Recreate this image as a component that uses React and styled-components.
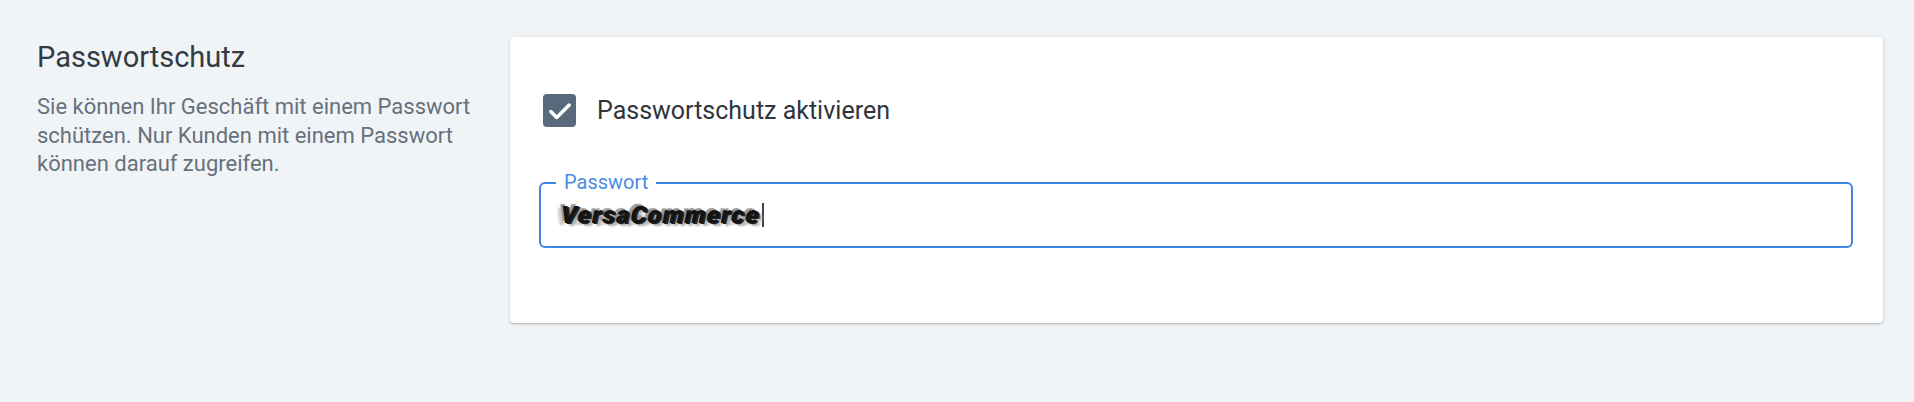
import React from 'react';
import styled, { createGlobalStyle } from 'styled-components';

const GlobalStyle = createGlobalStyle`
  html, body {
    margin: 0;
    padding: 0;
    background: #f1f4f7;
    font-family: Roboto, "Noto Sans", "Liberation Sans", sans-serif;
  }
`;

const Page = styled.div`
  width: 1914px;
  height: 402px;
  box-sizing: border-box;
  padding: 37px 31px 0 37px;
  display: flex;
  gap: 33px;
`;

const Aside = styled.div`
  width: 440px;
  flex-shrink: 0;
`;

const Title = styled.h2`
  margin: 3px 0 0;
  font-size: 29px;
  line-height: 34px;
  font-weight: 400;
  color: #333b44;
`;

const Description = styled.p`
  margin: 19px 0 0;
  font-size: 22px;
  line-height: 28.5px;
  color: #66717d;
`;

const Card = styled.div`
  flex: 1;
  height: 286px;
  box-sizing: border-box;
  background: #fff;
  border-radius: 4px;
  box-shadow: 0 1px 3px rgba(0, 0, 0, 0.22), 0 1px 1px rgba(0, 0, 0, 0.08);
  padding: 57px 30px 0 29px;
`;

const CheckRow = styled.label`
  display: flex;
  align-items: center;
  gap: 21px;
  padding-left: 4px;
  font-size: 25px;
  color: #2f353b;
`;

const Box = styled.span`
  width: 33px;
  height: 33px;
  border-radius: 4px;
  background: #586a7b;
  display: flex;
  align-items: center;
  justify-content: center;
`;

const Field = styled.div`
  position: relative;
  margin-top: 55px;
  height: 66px;
  box-sizing: border-box;
  border: 2px solid #3d86e2;
  border-radius: 6px;
  display: flex;
  align-items: center;
  padding-left: 20px;
`;

const FieldLabel = styled.span`
  position: absolute;
  top: -15px;
  left: 15px;
  padding: 0 8px;
  background: #fff;
  font-size: 20px;
  line-height: 26px;
  color: #4a8ce4;
`;

const Scribble = styled.span`
  font-size: 24px;
  font-weight: 900;
  letter-spacing: 1.4px;
  color: #141414;
  transform: skewX(-12deg);
  text-shadow: 2px 1px 0 #222, -3px -2px 1px #999, 5px 3px 2px #b5b5b5, -5px 2px 2px #d0d0d0;
`;

const Caret = styled.span`
  width: 2px;
  height: 24px;
  margin-left: 2px;
  background: #444;
`;

export default function App() {
  return (
    <>
      <GlobalStyle />
      <Page>
        <Aside>
          <Title>Passwortschutz</Title>
          <Description>
            Sie können Ihr Geschäft mit einem Passwort schützen. Nur Kunden mit einem Passwort können darauf zugreifen.
          </Description>
        </Aside>
        <Card>
          <CheckRow>
            <Box>
              <svg width="26" height="26" viewBox="0 0 24 24" fill="none">
                <path d="M3.5 12.5l5.5 5.5L20.5 6.5" stroke="#fff" strokeWidth="3.2" strokeLinecap="round" strokeLinejoin="round" />
              </svg>
            </Box>
            Passwortschutz aktivieren
          </CheckRow>
          <Field>
            <FieldLabel>Passwort</FieldLabel>
            <Scribble>VersaCommerce</Scribble>
            <Caret />
          </Field>
        </Card>
      </Page>
    </>
  );
}
